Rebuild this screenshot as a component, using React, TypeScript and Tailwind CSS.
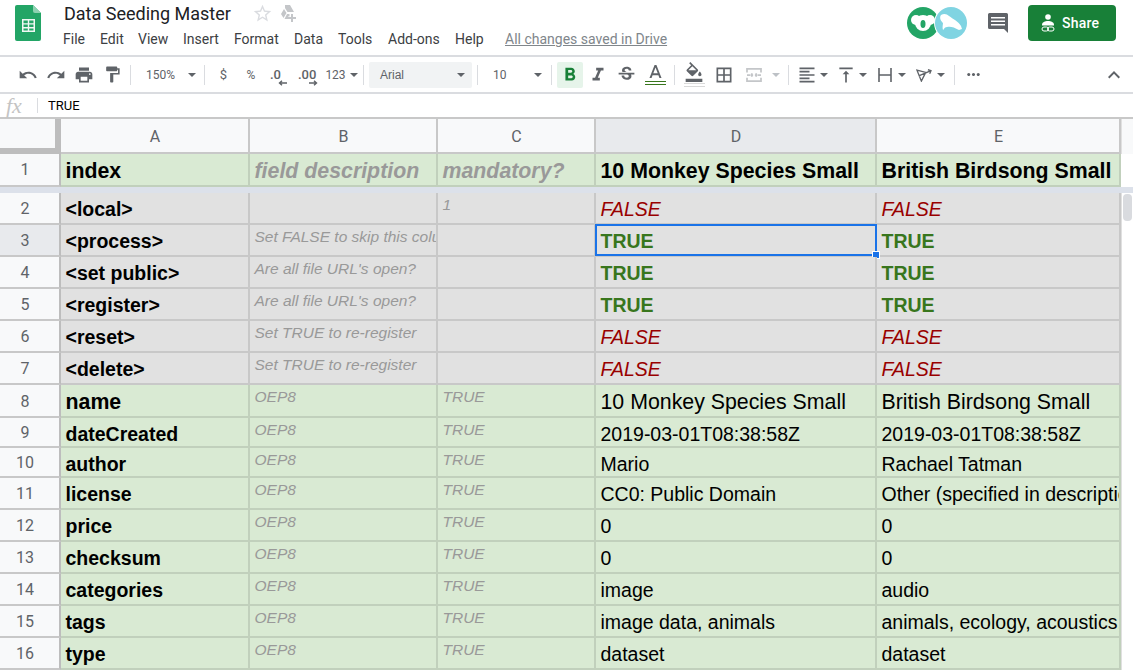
import React from "react";
import {
  MdUndo,
  MdRedo,
  MdPrint,
  MdFormatPaint,
  MdFormatBold,
  MdFormatItalic,
  MdStrikethroughS,
  MdFormatColorFill,
  MdBorderAll,
  MdFormatAlignLeft,
  MdVerticalAlignTop,
  MdMoreHoriz,
  MdExpandLess,
  MdStarBorder,
} from "react-icons/md";

const menuItems = [
  { label: "File", w: "w-[37px]" },
  { label: "Edit", w: "w-[38px]" },
  { label: "View", w: "w-[45px]" },
  { label: "Insert", w: "w-[51px]" },
  { label: "Format", w: "w-[60px]" },
  { label: "Data", w: "w-[44px]" },
  { label: "Tools", w: "w-[50px]" },
  { label: "Add-ons", w: "w-[67px]" },
  { label: "Help", w: "w-[50px]" },
];

const Caret = ({ light }: { light?: boolean }) => (
  <span
    className={`inline-block w-0 h-0 border-x-[4px] border-x-transparent border-t-[4px] ${
      light ? "border-t-[#bdc1c6]" : "border-t-[#5f6368]"
    }`}
  />
);

const Sep = () => (
  <div className="w-[9px] flex justify-center shrink-0">
    <div className="w-px h-[20px] bg-[#dadce0]" />
  </div>
);

const Slot = ({ w, children, className = "" }: { w: string; children?: React.ReactNode; className?: string }) => (
  <div className={`${w} h-[28px] shrink-0 flex items-center justify-center ${className}`}>{children}</div>
);

const Toolbar = () => (
  <div className="h-[39px] border-y-2 border-[#dadce0] flex items-center pl-[14px] text-[#5f6368] font-[Roboto,sans-serif] text-[13px] bg-white">
    <Slot w="w-[28px]"><MdUndo size={20} /></Slot>
    <Slot w="w-[28px]"><MdRedo size={20} /></Slot>
    <Slot w="w-[28px]"><MdPrint size={20} /></Slot>
    <Slot w="w-[28px]"><MdFormatPaint size={19} /></Slot>
    <Sep />
    <Slot w="w-[65px]" className="justify-start! pl-[11px] gap-[13px]">
      <span className="text-[12px]">150%</span>
      <Caret />
    </Slot>
    <Sep />
    <Slot w="w-[28px]" className="pl-[1px]">$</Slot>
    <Slot w="w-[28px]"><span className="text-[12px]">%</span></Slot>
    <Slot w="w-[27px]" className="flex-col items-start! pl-[5px] pt-[6px] leading-[11px]">
      <span className="text-[13px] font-medium">.0</span>
      <svg className="ml-[8px]" width="10" height="6" viewBox="0 0 10 6"><path d="M9 3H2M4 .8 1.500 3 4 5.200" fill="none" stroke="#5f6368" strokeWidth="1.400" /></svg>
    </Slot>
    <Slot w="w-[27px]" className="flex-col items-start! pl-[6px] pt-[6px] leading-[11px]">
      <span className="text-[13px] font-medium">.00</span>
      <svg className="ml-[10px]" width="10" height="6" viewBox="0 0 10 6"><path d="M1 3h7M6 .8 8.500 3 6 5.200" fill="none" stroke="#5f6368" strokeWidth="1.400" /></svg>
    </Slot>
    <Slot w="w-[40px]" className="pl-[5px] gap-[4px]">
      <span className="text-[12px]">123</span>
      <Caret />
    </Slot>
    <Sep />
    <div className="w-[103px] h-[26px] ml-[1px] shrink-0 bg-[#f1f3f4] rounded-[2px] flex items-center justify-between pl-[11px] pr-[7px] text-[12px]">
      <span className="font-['Liberation_Sans',sans-serif]">Arial</span>
      <Caret />
    </div>
    <div className="ml-[1px]"><Sep /></div>
    <Slot w="w-[65px]" className="justify-between! pl-[11px] pr-[5px]">
      <span className="text-[12px]">10</span>
      <Caret />
    </Slot>
    <Sep />
    <div className="w-[26px] h-[26px] ml-[1px] shrink-0 rounded-[2px] bg-[#e6f4ea] flex items-center justify-center text-[#188038]">
      <MdFormatBold size={22} />
    </div>
    <Slot w="w-[29px]"><MdFormatItalic size={22} /></Slot>
    <Slot w="w-[28px]"><MdStrikethroughS size={21} /></Slot>
    <Slot w="w-[30px]" className="flex-col pt-[1px]">
      <svg width="13" height="13" viewBox="5 3 14 14" fill="#5f6368">
        <path d="M11 3 5.500 17h2.250l1.120-3h6.250l1.120 3h2.250L13 3h-2zm-1.380 9L12 5.670 14.380 12H9.620z" />
      </svg>
      <div className="w-[21px] h-[4px] mt-[3px] border-y border-[#38761d]" />
    </Slot>
    <Sep />
    <Slot w="w-[30px]" className="flex-col">
      <MdFormatColorFill size={20} className="-mt-[1px]" />
      <div className="w-[21px] h-[4px] mt-[1px] border-y border-[#d9d9d9]" />
    </Slot>
    <Slot w="w-[30px]"><MdBorderAll size={20} /></Slot>
    <Slot w="w-[30px]">
      <svg width="16" height="14" viewBox="0 0 18 16" fill="none" stroke="#c4c6c9" strokeWidth="2">
        <path d="M1 5V1h16v4M1 11v4h16v-4M1 8h4M13 8h4M8 8H6M10 8h2M6.500 6v4M11.500 6v4" />
      </svg>
    </Slot>
    <Slot w="w-[14px]"><Caret light /></Slot>
    <Slot w="w-[10px]"><div className="w-px h-[20px] bg-[#dadce0]" /></Slot>
    <Slot w="w-[26px]" className="ml-[1px]"><MdFormatAlignLeft size={20} /></Slot>
    <Slot w="w-[8px]"><Caret /></Slot>
    <Slot w="w-[26px]" className="ml-[5px]"><MdVerticalAlignTop size={20} /></Slot>
    <Slot w="w-[8px]"><Caret /></Slot>
    <Slot w="w-[26px]" className="ml-[5px]">
      <svg width="14" height="14" viewBox="0 0 14 14" fill="none" stroke="#5f6368" strokeWidth="1.600">
        <path d="M1 0v14M13 0v14M1 7h12" />
      </svg>
    </Slot>
    <Slot w="w-[8px]"><Caret /></Slot>
    <Slot w="w-[27px]" className="ml-[4px]">
      <svg width="16" height="14" viewBox="0 0 18 16" fill="none" stroke="#5f6368" strokeWidth="1.500">
        <path d="M1 2.500 11 5 6 15ZM3 9 17 3M13.500 2l3.500 1-1.500 3.500" />
      </svg>
    </Slot>
    <Slot w="w-[8px]"><Caret /></Slot>
    <Slot w="w-[10px]" className="ml-[4px]"><div className="w-px h-[20px] bg-[#dadce0]" /></Slot>
    <Slot w="w-[26px]" className="ml-[1px]"><MdMoreHoriz size={19} /></Slot>
    <div className="ml-auto mr-[7px]"><MdExpandLess size={24} /></div>
  </div>
);

const Header = () => (
  <div className="h-[55px] flex bg-white font-[Roboto,sans-serif]">
    <div className="w-[63px] shrink-0 pl-[15px] pt-[5px]">
      <svg width="26" height="36" viewBox="0 0 26 36">
        <path d="M2 0h16l8 8v26a2 2 0 0 1-2 2H2a2 2 0 0 1-2-2V2a2 2 0 0 1 2-2z" fill="#23a566" />
        <path d="M18 0l8 8h-6a2 2 0 0 1-2-2z" fill="#8ed1b1" />
        <path d="M7 14h13v13H7zM8.500 15.500v2.700h4.300v-2.700zm5.700 0v2.700h4.300v-2.700zM8.500 19.600v2.500h4.300v-2.500zm5.700 0v2.500h4.300v-2.500zM8.500 23.500v2.100h4.300v-2.100zm5.700 0v2.100h4.300v-2.100z" fill="#f1f8f4" fillRule="evenodd" />
      </svg>
    </div>
    <div className="flex-1 min-w-0">
      <div className="flex items-center h-[27px]">
        <span className="text-[18px] text-[#202124] w-[189px] pl-[1px]">Data Seeding Master</span>
        <MdStarBorder size={21} className="text-[#dadce0]" />
        <svg className="ml-[6px]" width="18" height="17" viewBox="0 0 18 17" fill="#c4c6c9">
          <path d="M6 0h5l4 7H8.500L6 3zM5 4l2.500 4L4.500 13 2 9zM5.500 14l2.500-5h2.500v2.500H9V14z" />
          <path d="M12 9h2v3h3v2h-3v3h-2v-3H9v-2h3z" />
        </svg>
      </div>
      <div className="flex items-center h-[20px] mt-[2px] text-[14px] text-[#3c4043]">
        {menuItems.map((m) => (
          <span key={m.label} className={`${m.w} shrink-0 whitespace-nowrap`}>{m.label}</span>
        ))}
        <span className="text-[#80868b] underline">All changes saved in Drive</span>
      </div>
    </div>
    <div className="w-[226px] shrink-0 flex pt-[7px]">
      <div className="flex w-[60px]">
        <div className="w-[32px] h-[32px] shrink-0 rounded-full bg-[#23a566] flex items-center justify-center">
          <svg width="24" height="20" viewBox="0 0 24 20" fill="#fff">
            <circle cx="5" cy="7" r="5" />
            <circle cx="19" cy="7" r="5" />
            <ellipse cx="12" cy="10" rx="8" ry="8" />
            <ellipse cx="12" cy="11" rx="2.500" ry="4" fill="#23a566" />
          </svg>
        </div>
        <div className="w-[32px] h-[32px] shrink-0 -ml-[4px] rounded-full bg-[#80d4e2] shadow-[0_0_0_1px_#ffffff] flex items-center justify-center">
          <svg width="26" height="22" viewBox="0 0 26 22" fill="#fff">
            <path d="M3 3c3-2 6-1 8 1 4 3 9 5 12 10l1 3-3 1c-5-3-9-4-12-3-3 0-3 3-4 3-1-3 0-5 0-7C3 9 1 6 3 3z" />
          </svg>
        </div>
      </div>
      <div className="w-[61px] flex justify-center pt-[6px]">
        <svg width="20" height="20" viewBox="0 0 20 20" fill="#5f6368">
          <path d="M1.500 0h17A1.500 1.500 0 0 1 20 1.500V20l-4-4H1.500A1.500 1.500 0 0 1 0 14.500v-13A1.500 1.500 0 0 1 1.500 0z" />
          <path d="M3 4h14v1.600H3zM3 7.500h14v1.600H3zM3 11h14v1.600H3z" fill="#fff" />
        </svg>
      </div>
      <div className="w-[88px] h-[36px] -mt-[2px] rounded-[4px] bg-[#188038] text-white flex items-center pl-[13px] gap-[7px]">
        <svg width="14" height="18" viewBox="0 0 14 18" fill="#fff">
          <circle cx="7" cy="3" r="2.800" />
          <path d="M1 11c0-3 3-4 6-4s6 1 6 4v.500H1z" />
          <rect x="1" y="13" width="6.500" height="4" rx="2" fill="none" stroke="#fff" />
          <rect x="6.500" y="13" width="6.500" height="4" rx="2" fill="none" stroke="#fff" />
        </svg>
        <span className="text-[14px] font-medium tracking-[0.2px]">Share</span>
      </div>
    </div>
  </div>
);

const FormulaBar = () => (
  <div className="h-[25px] flex items-center bg-white border-b-2 border-[#c8c8c8]">
    <span className="w-[37px] pl-[6px] text-[#c4c4c4] italic text-[22px] leading-none font-['Liberation_Serif',serif]">fx</span>
    <div className="w-px h-[15px] bg-[#dadce0]" />
    <span className="pl-[10px] text-[13px] font-[Roboto,sans-serif] text-black">TRUE</span>
  </div>
);

type Kind = "gray" | "green";

type Row = {
  n: number;
  h: string;
  kind: Kind;
  a: string;
  b?: string;
  c?: string;
  d: string;
  e: string;
  big?: boolean;
  flag?: boolean;
};

const rows: Row[] = [
  { n: 2, h: "h-[32px]", kind: "gray", a: "<local>", c: "1", d: "FALSE", e: "FALSE", flag: true },
  { n: 3, h: "h-[32px]", kind: "gray", a: "<process>", b: "Set FALSE to skip this column", d: "TRUE", e: "TRUE", flag: true },
  { n: 4, h: "h-[32px]", kind: "gray", a: "<set public>", b: "Are all file URL's open?", d: "TRUE", e: "TRUE", flag: true },
  { n: 5, h: "h-[32px]", kind: "gray", a: "<register>", b: "Are all file URL's open?", d: "TRUE", e: "TRUE", flag: true },
  { n: 6, h: "h-[32px]", kind: "gray", a: "<reset>", b: "Set TRUE to re-register", d: "FALSE", e: "FALSE", flag: true },
  { n: 7, h: "h-[32px]", kind: "gray", a: "<delete>", b: "Set TRUE to re-register", d: "FALSE", e: "FALSE", flag: true },
  { n: 8, h: "h-[33px]", kind: "green", a: "name", b: "OEP8", c: "TRUE", d: "10 Monkey Species Small", e: "British Birdsong Small", big: true },
  { n: 9, h: "h-[30px]", kind: "green", a: "dateCreated", b: "OEP8", c: "TRUE", d: "2019-03-01T08:38:58Z", e: "2019-03-01T08:38:58Z" },
  { n: 10, h: "h-[30px]", kind: "green", a: "author", b: "OEP8", c: "TRUE", d: "Mario", e: "Rachael Tatman" },
  { n: 11, h: "h-[32px]", kind: "green", a: "license", b: "OEP8", c: "TRUE", d: "CC0: Public Domain", e: "Other (specified in description)" },
  { n: 12, h: "h-[32px]", kind: "green", a: "price", b: "OEP8", c: "TRUE", d: "0", e: "0" },
  { n: 13, h: "h-[32px]", kind: "green", a: "checksum", b: "OEP8", c: "TRUE", d: "0", e: "0" },
  { n: 14, h: "h-[32px]", kind: "green", a: "categories", b: "OEP8", c: "TRUE", d: "image", e: "audio" },
  { n: 15, h: "h-[32px]", kind: "green", a: "tags", b: "OEP8", c: "TRUE", d: "image data, animals", e: "animals, ecology, acoustics, birds" },
  { n: 16, h: "h-[32px]", kind: "green", a: "type", b: "OEP8", c: "TRUE", d: "dataset", e: "dataset" },
];

const widths = ["w-[189px]", "w-[188px]", "w-[158px]", "w-[281px]", "w-[244px]"];

const Cell = ({ w, kind, className = "", children }: { w: string; kind: Kind; className?: string; children?: React.ReactNode }) => (
  <div
    className={`${w} shrink-0 h-full overflow-hidden whitespace-nowrap pl-[4.5px] border-r-2 border-b-2 ${
      kind === "gray" ? "bg-[#e1e1e1] border-[#c8c8c8]" : "bg-[#d9ead3] border-[#c1d0bc]"
    } ${className}`}
  >
    {children}
  </div>
);

const Note = ({ w, kind, text }: { w: string; kind: Kind; text?: string }) => (
  <Cell w={w} kind={kind} className="pt-[2px] text-[15.5px] leading-[20px] italic text-[#999999]">
    {text}
  </Cell>
);

const valueClass = (r: Row, v: string) => {
  if (r.flag && v === "TRUE") return "font-bold text-[#38761d] text-[19.5px]";
  if (r.flag) return "italic text-[#990000] text-[19.5px]";
  return r.big ? "text-[21.33px] text-black" : "text-[19.5px] text-black";
};

const RowHead = ({ n, active, className = "" }: { n: number; active?: boolean; className?: string }) => (
  <div
    className={`w-[61px] shrink-0 h-full flex items-center justify-center pr-[9px] text-[16px] font-[Roboto,sans-serif] text-[#5f6368] border-b-2 border-b-[#c8c8c8] border-r-2 border-r-[#bdbdbd] ${
      active ? "bg-[#e8eaed]" : "bg-[#f8f9fa]"
    } ${className}`}
  >
    {n}
  </div>
);

const Sheet = () => (
  <div className="flex-1 min-w-0 font-['Liberation_Sans',sans-serif]">
    {rows.map((r) => (
      <div key={r.n} className={`flex ${r.h}`}>
        <RowHead n={r.n} active={r.n === 3} className="pt-[2px]" />
        <Cell w={widths[0]} kind={r.kind} className={`font-bold text-black pt-[3px] ${r.big ? "text-[21.33px] leading-[29px]" : "text-[19.5px] leading-[27px]"}`}>
          {r.a}
        </Cell>
        <Note w={widths[1]} kind={r.kind} text={r.b} />
        <Note w={widths[2]} kind={r.kind} text={r.c} />
        <div className={`relative ${widths[3]} shrink-0 h-full`}>
          <Cell w="w-full" kind={r.kind} className={`pt-[3px] leading-[27px] ${r.big ? "leading-[29px]!" : ""} ${valueClass(r, r.d)}`}>
            {r.d}
          </Cell>
          {r.n === 3 && (
            <div className="absolute -left-px -top-px w-[282px] h-[32px] border-2 border-[#1a73e8]">
              <div className="absolute -right-[5px] -bottom-[5px] w-[8px] h-[8px] bg-[#1a73e8] border border-white" />
            </div>
          )}
        </div>
        <Cell w={widths[4]} kind={r.kind} className={`pt-[3px] leading-[27px] ${r.big ? "leading-[29px]!" : ""} ${valueClass(r, r.e)}`}>
          {r.e}
        </Cell>
      </div>
    ))}
  </div>
);

const columnHeads = [
  { label: "A", w: widths[0] },
  { label: "B", w: widths[1] },
  { label: "C", w: widths[2] },
  { label: "D", w: widths[3], active: true },
  { label: "E", w: widths[4] },
];

export default function App() {
  return (
    <div className="w-[1133px] h-[670px] overflow-hidden bg-white">
      <Header />
      <Toolbar />
      <FormulaBar />
      <div className="flex h-[35px] font-[Roboto,sans-serif] text-[16px] text-[#5f6368] bg-[#f8f9fa]">
        <div className="w-[61px] shrink-0 border-r-[6px] border-b-[6px] border-[#bdbdbd]" />
        {columnHeads.map((c) => (
          <div
            key={c.label}
            className={`${c.w} shrink-0 flex items-center justify-center pl-[1px] pt-[3px] border-r-2 border-b-2 border-[#c8c8c8] ${c.active ? "bg-[#e8eaed]" : ""}`}
          >
            {c.label}
          </div>
        ))}
        <div className="flex-1 border-l border-[#e0e0e0]" />
      </div>
      <div className="flex h-[33px] font-['Liberation_Sans',sans-serif]">
        <RowHead n={1} />
        <Cell w={widths[0]} kind="green" className="pt-[1px] font-bold text-[21.33px] leading-[33px] text-black">index</Cell>
        <Cell w={widths[1]} kind="green" className="pt-[1px] font-bold italic text-[21.33px] leading-[33px] text-[#999999]">field description</Cell>
        <Cell w={widths[2]} kind="green" className="pt-[1px] font-bold italic text-[21.33px] leading-[33px] text-[#999999]">mandatory?</Cell>
        <Cell w={widths[3]} kind="green" className="pt-[1px] font-bold text-[21.33px] leading-[33px] text-black">10 Monkey Species Small</Cell>
        <Cell w={widths[4]} kind="green" className="pt-[1px] font-bold text-[21.33px] leading-[33px] text-black">British Birdsong Small</Cell>
      </div>
      <div className="h-[6px] bg-[#dce1ea]" />
      <div className="flex">
        <Sheet />
        <div className="w-[12px] shrink-0 border-l border-[#e0e0e0] bg-white pt-[1px] pl-[1px]">
          <div className="w-[9px] h-[27px] rounded-[4px] bg-[#d9dbdf]" />
        </div>
      </div>
    </div>
  );
}
